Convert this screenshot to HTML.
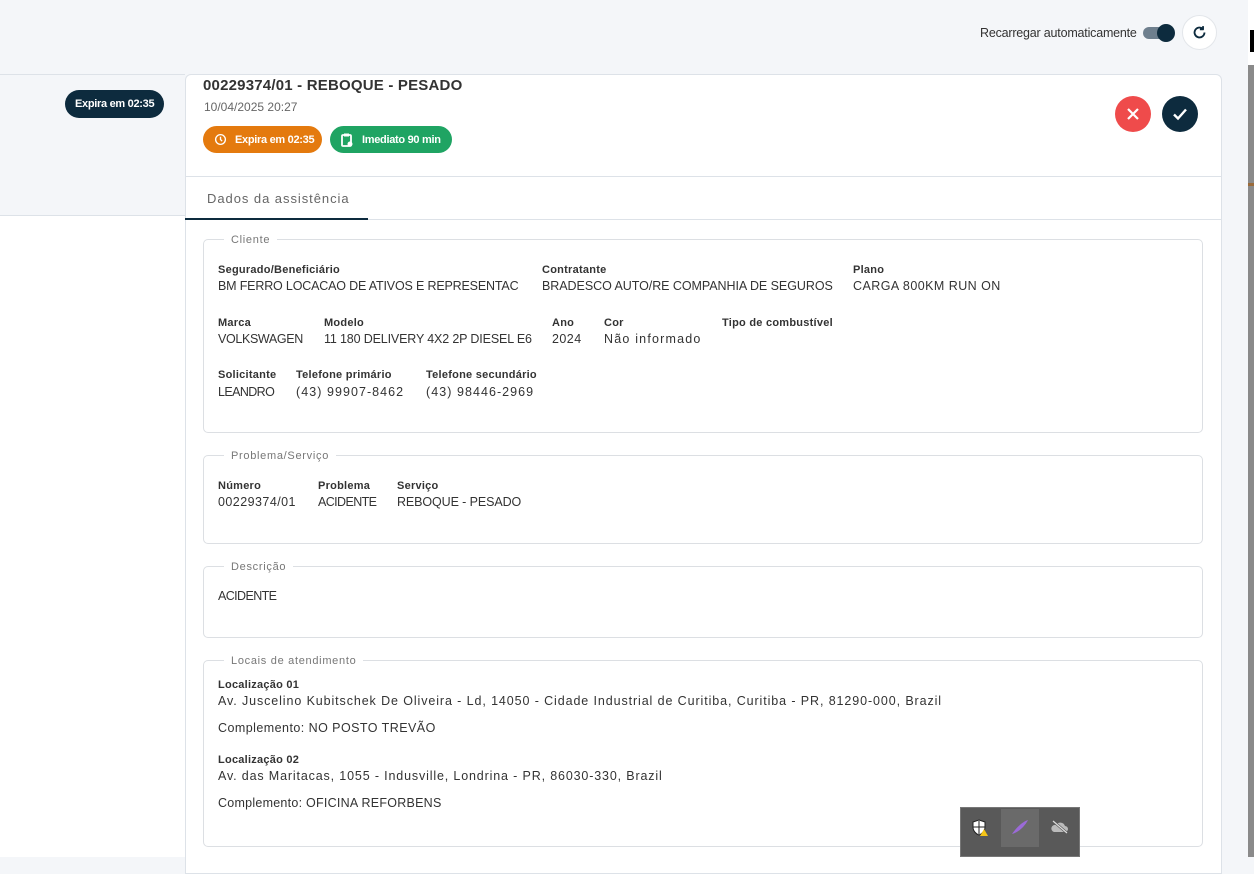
<!DOCTYPE html>
<html><head><meta charset="utf-8"><style>
*{margin:0;padding:0;box-sizing:border-box}
body{width:1254px;height:857px;overflow:hidden;background:#f4f6f9;font-family:"Liberation Sans",sans-serif;color:#222;position:relative}
.a{position:absolute;white-space:nowrap}
.lbl{font-size:11px;font-weight:bold;color:#333;letter-spacing:0.25px}
.val{font-size:12.5px;color:#333;letter-spacing:0.45px}
.fs{position:absolute;left:203px;width:1000px;border:1px solid #dcdfe3;border-radius:5px}
.leg{position:absolute;top:-5px;left:20px;background:#fff;padding:0 7px;font-size:11px;color:#777;letter-spacing:0.7px;line-height:11px}
.pill{position:absolute;height:27px;border-radius:14px;color:#fff;font-size:11px;font-weight:bold;display:flex;align-items:center;letter-spacing:-0.3px}
</style></head><body>
<div class="a" style="left:1248px;top:0;width:6px;height:65px;background:#fff"></div>
<div class="a" style="left:1250px;top:30px;width:4px;height:22px;background:#000"></div>
<div class="a" style="left:1248px;top:65px;width:6px;height:792px;background:#8a8a8a"></div>
<div class="a" style="left:1248px;top:183px;width:6px;height:3px;background:#9a6a3a"></div>

<div class="a" style="left:980px;top:26px;font-size:12.5px;color:#333;letter-spacing:-0.2px">Recarregar automaticamente</div>
<div class="a" style="left:1143px;top:27px;width:30px;height:12px;border-radius:6px;background:#6e7f8e"></div>
<div class="a" style="left:1157px;top:24px;width:18px;height:18px;border-radius:50%;background:#0d2b3e"></div>
<div class="a" style="left:1182px;top:15px;width:35px;height:35px;border-radius:50%;background:#fff;border:1px solid #e3e6ea"></div>
<svg class="a" style="left:1191px;top:24px" width="17" height="17" viewBox="0 0 24 24" fill="none" stroke="#0d2b3e" stroke-width="2.6"><path d="M19 12a7 7 0 1 1-2.5-5.4"/><path d="M17 3v4.5h-4.5" stroke-linejoin="round"/></svg>

<div class="a" style="left:0;top:74px;width:185px;height:1px;background:#dde2e8"></div>
<div class="a" style="left:0;top:215px;width:186px;height:642px;background:#fff;border-top:1px solid #dde2e8"></div>
<div class="pill" style="left:65px;top:90px;background:#0d2b3e;padding:0 10px;height:28px">Expira em 02:35</div>

<div class="a" style="left:185px;top:74px;width:1037px;height:800px;background:#fff;border:1px solid #dde2e8;border-radius:6px 6px 0 0"></div>
<div class="a" style="left:203px;top:77px;font-size:15px;font-weight:bold;color:#333;letter-spacing:0.2px">00229374/01 - REBOQUE - PESADO</div>
<div class="a" style="left:204px;top:100px;font-size:12px;color:#666">10/04/2025 20:27</div>
<div class="pill" style="left:203px;top:126px;width:119px;background:#e47a0e;padding-left:11px"><svg width="13" height="13" viewBox="0 0 24 24" fill="none" stroke="#fff" stroke-width="2.5"><circle cx="12" cy="12" r="9"/><path d="M12 7v5l3 3"/></svg><span style="margin-left:8px">Expira em 02:35</span></div>
<div class="pill" style="left:330px;top:126px;width:122px;background:#1fa463;padding-left:11px"><svg width="12" height="14" viewBox="0 0 12 14"><rect x="1" y="2" width="9" height="11" rx="1" fill="none" stroke="#fff" stroke-width="1.8"/><rect x="3" y="0.5" width="5" height="3" fill="#fff"/><circle cx="9" cy="11" r="2.5" fill="#fff"/></svg><span style="margin-left:9px">Imediato 90 min</span></div>
<div class="a" style="left:1115px;top:96px;width:36px;height:36px;border-radius:50%;background:#ef4b4b"></div>
<svg class="a" style="left:1125px;top:106px" width="16" height="16" viewBox="0 0 16 16" stroke="#fff" stroke-width="2.2"><path d="M3 3l10 10M13 3L3 13"/></svg>
<div class="a" style="left:1162px;top:96px;width:36px;height:36px;border-radius:50%;background:#0d2b3e"></div>
<svg class="a" style="left:1171px;top:106px" width="18" height="16" viewBox="0 0 18 16" fill="none" stroke="#fff" stroke-width="2.4"><path d="M3 8.5l4 4 8-9"/></svg>

<div class="a" style="left:185px;top:176px;width:1037px;height:1px;background:#dde2e8"></div>
<div class="a" style="left:207px;top:191px;font-size:13px;color:#666;letter-spacing:0.95px">Dados da assistência</div>
<div class="a" style="left:185px;top:218px;width:183px;height:2px;background:#0d2b3e"></div>
<div class="a" style="left:368px;top:219px;width:854px;height:1px;background:#dde2e8"></div>

<div class="fs" style="top:239px;height:194px"><span class="leg">Cliente</span></div>
<div class="a lbl" style="left:218px;top:264px">Segurado/Beneficiário</div>
<div class="a val" style="left:218px;top:279px;letter-spacing:-0.17px">BM FERRO LOCACAO DE ATIVOS E REPRESENTAC</div>
<div class="a lbl" style="left:542px;top:264px">Contratante</div>
<div class="a val" style="left:542px;top:279px;letter-spacing:-0.05px">BRADESCO AUTO/RE COMPANHIA DE SEGUROS</div>
<div class="a lbl" style="left:853px;top:264px">Plano</div>
<div class="a val" style="left:853px;top:279px">CARGA 800KM RUN ON</div>
<div class="a lbl" style="left:218px;top:317px">Marca</div>
<div class="a val" style="left:218px;top:332px;letter-spacing:-0.35px">VOLKSWAGEN</div>
<div class="a lbl" style="left:324px;top:317px">Modelo</div>
<div class="a val" style="left:324px;top:332px;letter-spacing:-0.15px">11 180 DELIVERY 4X2 2P DIESEL E6</div>
<div class="a lbl" style="left:552px;top:317px">Ano</div>
<div class="a val" style="left:552px;top:332px">2024</div>
<div class="a lbl" style="left:604px;top:317px">Cor</div>
<div class="a val" style="left:604px;top:332px;letter-spacing:1.2px">Não informado</div>
<div class="a lbl" style="left:722px;top:317px">Tipo de combustível</div>
<div class="a lbl" style="left:218px;top:369px">Solicitante</div>
<div class="a val" style="left:218px;top:385px;letter-spacing:-0.6px">LEANDRO</div>
<div class="a lbl" style="left:296px;top:369px">Telefone primário</div>
<div class="a val" style="left:296px;top:385px;letter-spacing:1.05px">(43) 99907-8462</div>
<div class="a lbl" style="left:426px;top:369px">Telefone secundário</div>
<div class="a val" style="left:426px;top:385px;letter-spacing:1.05px">(43) 98446-2969</div>

<div class="fs" style="top:455px;height:89px"><span class="leg">Problema/Serviço</span></div>
<div class="a lbl" style="left:218px;top:480px">Número</div>
<div class="a val" style="left:218px;top:495px">00229374/01</div>
<div class="a lbl" style="left:318px;top:480px">Problema</div>
<div class="a val" style="left:318px;top:495px;letter-spacing:-0.6px">ACIDENTE</div>
<div class="a lbl" style="left:397px;top:480px">Serviço</div>
<div class="a val" style="left:397px;top:495px;letter-spacing:-0.1px">REBOQUE - PESADO</div>

<div class="fs" style="top:566px;height:72px"><span class="leg">Descrição</span></div>
<div class="a val" style="left:218px;top:589px;letter-spacing:-0.6px">ACIDENTE</div>

<div class="fs" style="top:660px;height:187px"><span class="leg">Locais de atendimento</span></div>
<div class="a lbl" style="left:218px;top:679px">Localização 01</div>
<div class="a val" style="left:218px;top:694px;letter-spacing:0.9px">Av. Juscelino Kubitschek De Oliveira - Ld, 14050 - Cidade Industrial de Curitiba, Curitiba - PR, 81290-000, Brazil</div>
<div class="a val" style="left:218px;top:721px">Complemento: NO POSTO TREVÃO</div>
<div class="a lbl" style="left:218px;top:754px">Localização 02</div>
<div class="a val" style="left:218px;top:769px;letter-spacing:0.85px">Av. das Maritacas, 1055 - Indusville, Londrina - PR, 86030-330, Brazil</div>
<div class="a val" style="left:218px;top:796px;letter-spacing:0.25px">Complemento: OFICINA REFORBENS</div>

<div class="a" style="left:960px;top:807px;width:120px;height:50px;background:#595959;border:1px solid #777"></div>
<div class="a" style="left:1001px;top:809px;width:38px;height:38px;background:#6a6a6a"></div>
<svg class="a" style="left:971px;top:819px" width="18" height="18" viewBox="0 0 18 18"><path d="M8 1l6 2v5c0 4-3 7-6 8-3-1-6-4-6-8V3z" fill="#fff" stroke="#222" stroke-width="1"/><path d="M8 2v13M2.5 8h11" stroke="#222" stroke-width="1"/><path d="M13 10l4 7h-8z" fill="#f5c518"/></svg>
<svg class="a" style="left:1010px;top:818px" width="20" height="18" viewBox="0 0 20 18"><path d="M2 16C6 10 12 4 18 2 15 8 9 14 2 16z" fill="#9b6ad8"/></svg>
<svg class="a" style="left:1051px;top:820px" width="18" height="14" viewBox="0 0 18 14"><path d="M3 12h11a3 3 0 0 0 0-6 5 5 0 0 0-9-1 3.5 3.5 0 0 0-2 7z" fill="#bbb"/><path d="M2 1l14 12" stroke="#595959" stroke-width="2.5"/><path d="M2 1l14 12" stroke="#ddd" stroke-width="1.2"/></svg>
</body></html>
